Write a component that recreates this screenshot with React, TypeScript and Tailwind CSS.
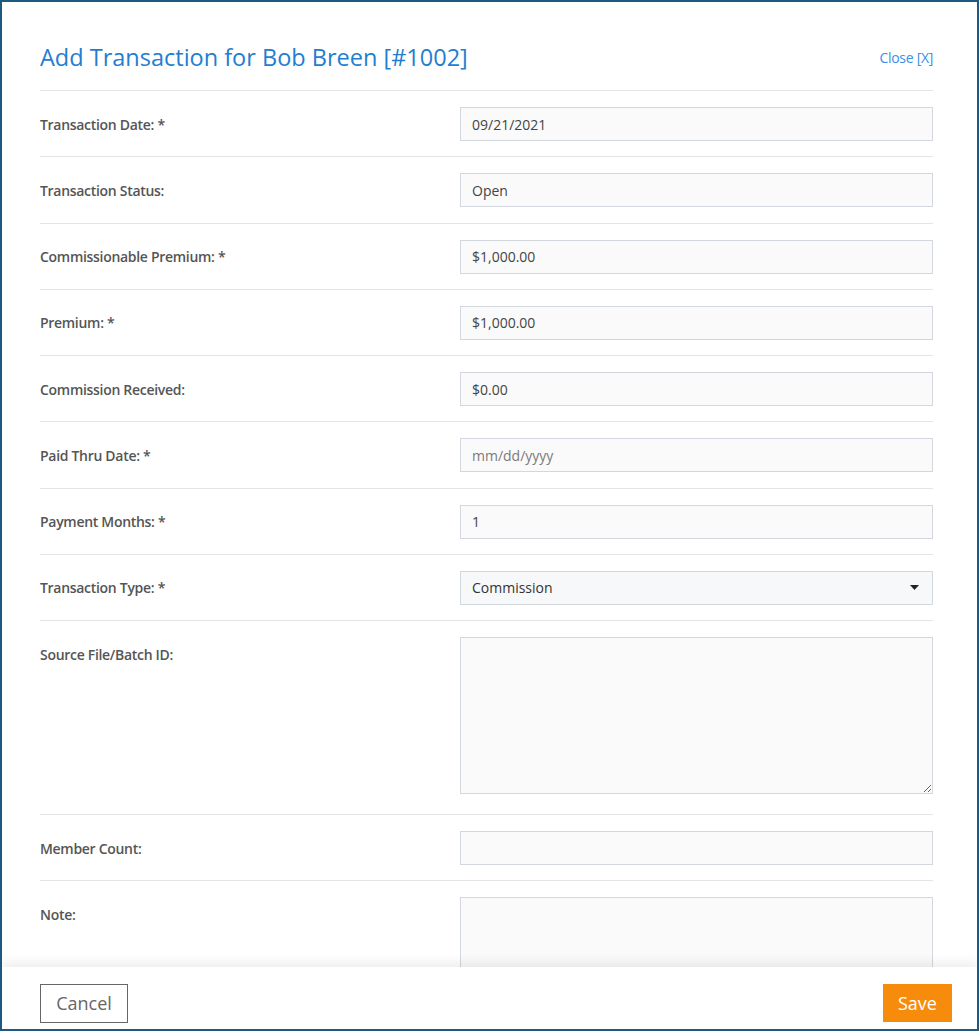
import React from 'react'

type Field = {
  label: string
  value?: string
  placeholder?: string
  kind?: 'input' | 'select' | 'textarea'
}

const FIELDS: Field[] = [
  { label: 'Transaction Date: *', value: '09/21/2021' },
  { label: 'Transaction Status:', value: 'Open' },
  { label: 'Commissionable Premium: *', value: '$1,000.00' },
  { label: 'Premium: *', value: '$1,000.00' },
  { label: 'Commission Received:', value: '$0.00' },
  { label: 'Paid Thru Date: *', placeholder: 'mm/dd/yyyy' },
  { label: 'Payment Months: *', value: '1' },
  { label: 'Transaction Type: *', value: 'Commission', kind: 'select' },
  { label: 'Source File/Batch ID:', kind: 'textarea' },
  { label: 'Member Count:', value: '' },
  { label: 'Note:', kind: 'textarea' },
]

function FieldControl({ field }: { field: Field }) {
  if (field.kind === 'select') {
    return (
      <div className="h-[34px] w-full border border-[#d3d8de] bg-[#f6f8fa] flex items-center justify-between pl-[11px] pr-[13px] text-[14px] text-[#333]">
        <span>{field.value}</span>
        <svg width="9" height="5" viewBox="0 0 9 5">
          <path d="M0 0h9L4.5 5z" fill="#222" />
        </svg>
      </div>
    )
  }
  if (field.kind === 'textarea') {
    return (
      <textarea
        readOnly
        className="block h-[157px] w-full border border-[#d3d8de] bg-[#fafafa] px-3 py-2 text-[14px] text-[#333] outline-none"
      />
    )
  }
  return (
    <input
      readOnly
      value={field.value ?? ''}
      placeholder={field.placeholder}
      className="block h-[34px] w-full border border-[#d3d8de] bg-[#fafafa] px-[11px] text-[14px] text-[#444] placeholder:text-[#7a7a7a] outline-none"
    />
  )
}

export default function App() {
  return (
    <div
      className="w-[979px] h-[1031px] border-2 border-[#1d5a7e] bg-white flex flex-col overflow-hidden"
      style={{ fontFamily: '"Open Sans", "Noto Sans", sans-serif' }}
    >
      {/* Scrolling body */}
      <div className="flex-1 overflow-hidden pl-[38px] pr-[44px]">
        <div className="flex items-center justify-between pt-[39px] pb-[17px]">
          <h1 className="text-[23.5px] leading-[32px] text-[#237ed0]">
            Add Transaction for Bob Breen [#1002]
          </h1>
          <a className="text-[14px] text-[#3b8fe8] tracking-[-0.3px]">Close [X]</a>
        </div>

        {FIELDS.map((field) => (
          <div
            key={field.label}
            className={
              field.kind === 'textarea'
                ? 'grid grid-cols-[420px_1fr] items-start border-t border-[#e4e4e4] pt-4 pb-5'
                : 'grid grid-cols-[420px_1fr] items-start border-t border-[#e4e4e4] pt-4 pb-[15.25px]'
            }
          >
            <label className="h-[34px] flex items-center text-[14px] font-semibold text-[#555] tracking-[-0.3px]">
              {field.label}
            </label>
            <FieldControl field={field} />
          </div>
        ))}
      </div>

      {/* Footer */}
      <div className="relative z-10 h-[62px] shrink-0 bg-white shadow-[0_-5px_10px_rgba(0,0,0,0.07)] flex items-start justify-between pt-[17px] pl-[38px] pr-[25px]">
        <button className="h-[39px] w-[88px] border border-[#666] text-[18px] text-[#666]">
          Cancel
        </button>
        <button className="h-[38px] w-[69px] bg-[#f78b0c] text-[18px] text-white">
          Save
        </button>
      </div>
    </div>
  )
}
